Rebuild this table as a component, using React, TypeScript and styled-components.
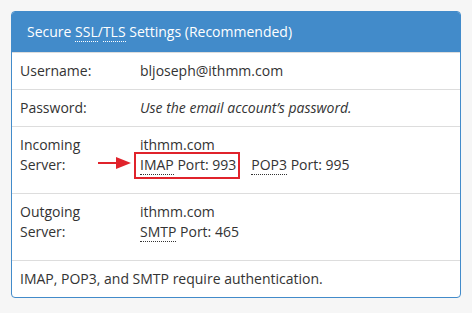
import React from 'react';
import styled, {createGlobalStyle} from 'styled-components';

const GlobalStyle = createGlobalStyle`
    html, body {
        margin: 0;
        padding: 0;
        background: #f6f6f6;
    }
    body {
        font-family: "Open Sans", "Noto Sans", sans-serif;
        font-size: 14px;
        color: #333;
    }
`

const Page = styled.div`
    padding: 11px 11px 18px 11px;
    width: 450px;
`

const Panel = styled.div`
    border: 1px solid #428bca;
    border-radius: 4px;
    background: #fff;
    overflow: hidden;
`

const Heading = styled.div`
    background: #428bca;
    color: #fff;
    height: 40px;
    line-height: 39px;
    padding: 0 15px;
    font-size: 14px;
`

const Abbr = styled.abbr`
    text-decoration: none;
    border-bottom: 1px dotted ${props => props.color || '#333'};
`

const Label = styled.div`
    width: 104px;
    padding: 8px 8px ${props => props.tall ? '18px' : '8px'} 8px;
    line-height: 20px;
`

const Value = styled.div`
    flex: 1;
    padding: 8px;
    line-height: 20px;
    font-style: ${props => props.italic ? 'italic' : 'normal'};
`

const Row = styled.div`
    display: flex;
    border-top: 1px solid #ddd;
    &:first-of-type {
        border-top: none;
    }
    &:first-of-type ${Label}, &:first-of-type ${Value} {
        padding-top: 7px;
    }
`

const Port = styled.span`
    margin-right: 15px;
`

const Highlight = styled.span`
    position: relative;
    margin-right: 15px;
    &::after {
        content: "";
        position: absolute;
        left: -6px;
        right: -4px;
        top: -3px;
        bottom: -5px;
        border: 2px solid #e0232b;
    }
`

const Arrow = styled.svg`
    position: absolute;
    left: -42px;
    top: 1px;
`

const Footer = styled.div`
    border-top: 1px solid #ddd;
    padding: 8px;
    line-height: 20px;
`

export default function App() {
    return (
        <Page>
            <GlobalStyle/>
            <Panel>
                <Heading>
                    Secure <Abbr color="#fff">SSL</Abbr>/<Abbr color="#fff">TLS</Abbr> Settings (Recommended)
                </Heading>
                <Row>
                    <Label>Username:</Label>
                    <Value>bljoseph@ithmm.com</Value>
                </Row>
                <Row>
                    <Label>Password:</Label>
                    <Value italic>Use the email account’s password.</Value>
                </Row>
                <Row>
                    <Label tall>Incoming Server:</Label>
                    <Value>
                        ithmm.com<br/>
                        <Highlight>
                            <Arrow width="34" height="14" viewBox="0 0 34 14">
                                <line x1="0" y1="7" x2="22" y2="7" stroke="#e0232b" strokeWidth="2"/>
                                <polygon points="18,1 33,7 18,13" fill="#e0232b"/>
                            </Arrow>
                            <Abbr>IMAP</Abbr> Port: 993
                        </Highlight>
                        <Port><Abbr>POP3</Abbr> Port: 995</Port>
                    </Value>
                </Row>
                <Row>
                    <Label tall>Outgoing Server:</Label>
                    <Value>
                        ithmm.com<br/>
                        <Abbr>SMTP</Abbr> Port: 465
                    </Value>
                </Row>
                <Footer>IMAP, POP3, and SMTP require authentication.</Footer>
            </Panel>
        </Page>
    )
}
